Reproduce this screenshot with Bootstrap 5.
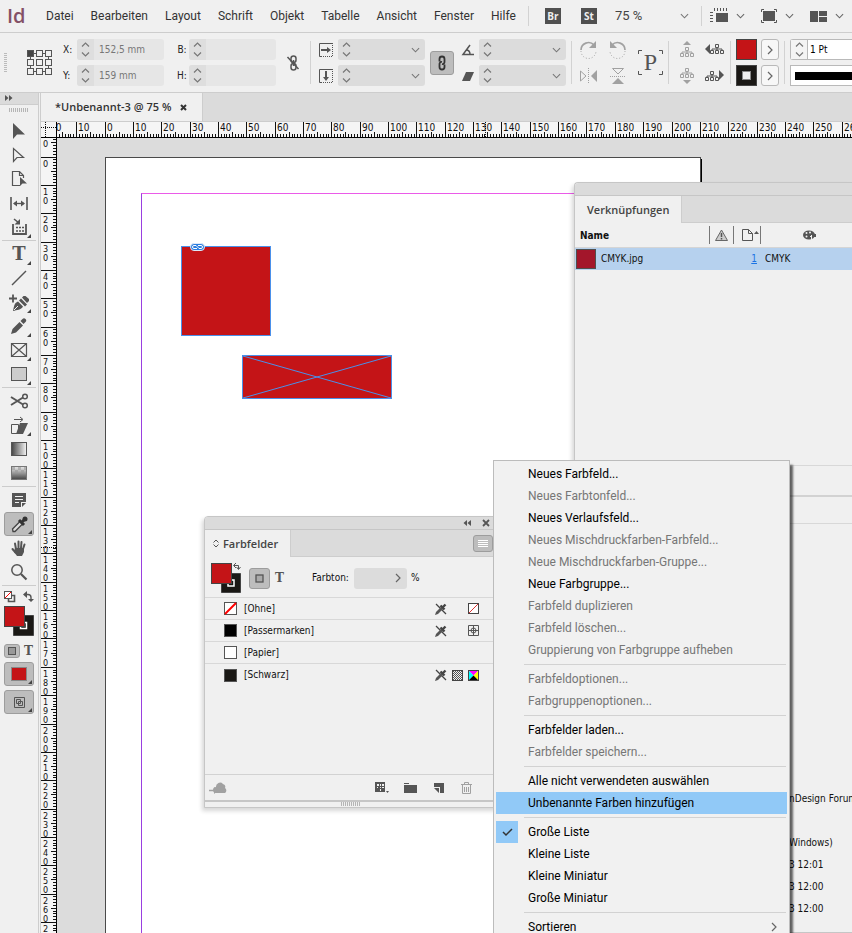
<!DOCTYPE html>
<html lang="de">
<head>
<meta charset="utf-8">
<meta name="viewport" content="width=device-width, initial-scale=1">
<title>Unbenannt-3 @ 75 %</title>
<link href="https://cdn.jsdelivr.net/npm/bootstrap@5.3.0/dist/css/bootstrap.min.css" rel="stylesheet">
<style>
:root{--ui:#f0f0f0;--bar:#dbdbdb;--line:#cdcdcd;--ink:#4f4f4f;--red:#c41417;--small:"DejaVu Sans Condensed","Roboto",sans-serif}
body{font:12px/16px "Roboto","Open Sans",sans-serif;color:#333;background:var(--ui)}
svg{display:block;flex:none;overflow:visible}
button{color:inherit;border:0;padding:0;background:none;font:inherit;line-height:1}
.ic{fill:none;stroke:#555}.ic .f,.f{fill:#555;stroke:none}
.dim{opacity:.5}
.s5{margin-left:5px}.s8{margin-left:8px}.s11{margin-left:11px}.s19{margin-left:19px}
.menubar{height:33px;border-bottom:1px solid var(--line)}
.brand-id{font:600 20px/28px "Open Sans",sans-serif;color:#845066;width:38px;padding-left:7px;flex:none}
.menus{gap:17px}
.menus a{color:#333;text-decoration:none}
.vr-bar{width:1px;background:#d2d2d2;flex:none}
.app-badge{width:16px;height:16px;background:#505050;color:#eee;font:700 10px/16px "Open Sans",sans-serif;text-align:center}
.controls{height:60px;border-bottom:1px solid var(--line)}
.pair{display:grid;grid-template-rows:21px 21px;row-gap:5px;align-items:center}
.pair label{font:10px/21px var(--small);color:#222;width:14px}
.fld{height:21px;background:#e6e6e6;border-radius:3px;overflow:hidden}
.fld .spin{width:17px;background:#dedede;display:flex;align-items:center;justify-content:center}
.fld input{width:70px;border:0;background:none;padding:0 5px;font:10px/21px var(--small);color:#777}
.fld .form-select{width:70px;height:21px;min-height:0;border:0;border-radius:0;padding:0}
.form-select{background-color:transparent;background-image:url("data:image/svg+xml,%3csvg xmlns='http://www.w3.org/2000/svg' viewBox='0 0 10 6'%3e%3cpath fill='none' stroke='%23777' stroke-width='1.2' d='M1 1l4 4 4-4'/%3e%3c/svg%3e");background-size:9px 6px;background-position:right 5px center}
.combo,.combo .spin{background:#dcdcdc}
.zoomsel{width:80px;border:0;padding:0 0 0 2px;font-size:13px;line-height:20px;color:#444;background-position:right 4px center}
.press{background:#bdbdbd;border:1px solid #9d9d9d;border-radius:3px;display:flex;align-items:center;justify-content:center}
.more{width:18px;height:21px;border:1px solid #b9b9b9;border-radius:3px;background:#f7f7f7;display:flex;align-items:center;justify-content:center}
.swatch-lg{width:21px;height:21px;border:1px solid #444;background:var(--red)}
.stroke-lg{background:#1a1815;display:flex;align-items:center;justify-content:center}
.stroke-lg::after{content:"";width:9px;height:9px;background:var(--ui);border:1px solid #888}
.glyph-p{font:24px/25px "Liberation Serif",serif;color:#555;width:25px;height:25px;text-align:center;position:relative}
.glyph-p svg{position:absolute;inset:0}
.weight{border:1px solid #b9b9b9;border-right:0;border-radius:3px 0 0 3px;background:#fff;height:21px}
.weight input{border:0;border-left:1px solid #b9b9b9;width:40px;font:10px/19px var(--small);color:#000;padding:0 0 0 2px}
.weight .spin{width:16px;background:#f4f4f4;display:flex;align-items:center;justify-content:center}
.stroke-style{border:1px solid #b9b9b9;border-right:0;background:#fff;height:21px;padding:6px 0 6px 4px}
.stroke-style i{display:block;height:8px;background:#000}
.tools{width:39px;border-right:1px solid var(--line);flex:none}
.tools-head{height:12px;background:var(--bar);border-bottom:1px solid var(--line);padding:2px 5px}
.tools-grip{padding:3px 10px 7px 9px}
.grip-h{height:4px;background:repeating-linear-gradient(90deg,#b5b5b5 0 1px,transparent 1px 2px)}
.tool{height:24px;width:100%;display:flex;align-items:center;justify-content:center;position:relative}
.tool.has::after{content:"";position:absolute;right:7px;bottom:1px;width:0;height:0;border:2px solid #444;border-top-color:transparent;border-left-color:transparent}
.tool.sel{width:30px;margin:0 4px;background:#bdbdbd;border:1px solid #9d9d9d;border-radius:3px}
.tool.sel.has::after{right:1px}
.tools hr{margin:1px 2px;border:0;height:1px;background:#ccc;opacity:1}
.serif-t{font:700 12px/14px "DejaVu Serif",serif;color:#555}
.serif-t.big{font-size:18px;line-height:22px}
.doc{margin-left:1px;border-left:1px solid var(--line)}
.doctabs{height:29px;background:var(--bar);border-bottom:1px solid var(--line)}
.doctab{font:600 11px/28px "Open Sans",sans-serif;color:#333;background:var(--ui);border-right:1px solid var(--line);padding:0 15px 0 14px;gap:9px}
.ruler{background:#f5f5f5;font:10px var(--small)}
.hruler{height:16px;border-bottom:1px solid #000}
.corner-cell{width:16px;border-right:1px solid #000;flex:none}
.vruler{width:16px;border-right:1px solid #000;flex:none;overflow:hidden;font-size:9px}
.ruler text{fill:#111}
.ruler path{stroke:#111;fill:none}
.board{background:#dcdcdc;position:relative;overflow:hidden}
.sheet{position:absolute;left:48px;top:19px;width:596px;height:843px;background:#fff;border:1px solid #4a4a4a;box-shadow:1px 2px 0 #000}
.margins{position:absolute;inset:35px;border:1px solid #9a3fe0;border-top-color:#ea5be8;border-bottom-color:#ea5be8}
.frame{position:absolute;background:var(--red);border:1px solid #4a90ea}
.frame-a{left:124px;top:108px;width:90px;height:90px}
.frame-b{left:185px;top:217px;width:150px;height:44px}
.link-mark{position:absolute;left:8px;top:-4px}
.panel{position:absolute;background:var(--ui);border:1px solid #c6c6c6;border-radius:4px 0 0 0;box-shadow:-2px 3px 4px rgba(0,0,0,.16);font:10px/16px var(--small);color:#111}
.panel-head{height:13px;background:var(--bar);border-bottom:1px solid #c6c6c6;border-radius:3px 0 0 0;flex:none}
.panel-tabs{height:27px;background:var(--bar);border-bottom:1px solid var(--line);flex:none}
.panel-tab{font:600 11px/27px "Open Sans",sans-serif;color:#444;background:var(--ui);border-right:1px solid var(--line);height:27px}
.links{left:517px;right:0;top:44px;bottom:0;border-right:0;overflow:hidden}
.links table{width:100%;table-layout:fixed;flex:none}
.links th{height:24px;padding:0;font-weight:700;color:#111;border-bottom:1px solid #d5d5d5}
.links th:first-child{padding:2px 0 0 5px}
.links td{height:23px;padding:1px 0 0;background:#b6d1ee;color:#111}
.links td:first-child{padding:0 0 0 1px}
.links a{color:#1b74e4}
.cell-rule{border-left:1px solid #777;border-right:1px solid #777;height:18px}
.thumb{width:20px;height:20px;background:#a3162b;border:1px solid #4f4f4f}
.palette{margin-left:42px}
.link-list{height:196px;border-bottom:1px solid #d8d8d8;flex:none}
.link-foot{height:31px;border-bottom:2px solid #d2d2d2;flex:none}
.info-head{height:27px;border-bottom:1px solid #d8d8d8;flex:none}
.info-lines{padding:264px 0 0 214px;white-space:nowrap}
.info-lines div{height:22px;line-height:22px}
.swatches{left:147px;top:378px;width:294px;height:292px;border-radius:4px 4px 0 0}
.sw-tools{height:41px;border-bottom:1px solid #d8d8d8;padding:2px 0 0 6px;flex:none}
.tint-field input{width:36px}
.sw-item{height:22px;border:0;border-bottom:1px solid #d8d8d8;background:transparent;border-radius:0;padding:0 18px 0 19px;color:#111;gap:7px}
.sw-marks{gap:5px;display:grid;grid-template-columns:12px 11px 11px;align-items:center;margin-left:auto}
.sw-marks svg:last-child{grid-column:3}
.chip{width:13px;height:13px;border:1px solid #555}
.fill-stroke{position:relative;width:30px;height:30px}
.sw-foot{height:26px;border-top:1px solid #d2d2d2;flex:none}
.foot-icons{gap:17px;padding-right:25px}
.sw-grip{height:7px;border-top:2px solid #c6c6c6;flex:none}
.sw-grip div{width:20px;margin:0 auto}
.popup.dropdown-menu{display:block;left:436px;top:322px;width:297px;padding:2px 0;background:#f1f1f1;border:1px solid #bcbcbc;border-radius:0;box-shadow:3px 5px 2px rgba(0,0,0,.6);font-size:12px;line-height:22px;overflow:hidden;color:#000}
.popup li:has(.dropdown-item){display:flex}
.popup .dropdown-item{height:22px;padding:0 10px 0 32px;margin:0 2px;flex:1;width:auto;line-height:22px;color:#000;position:relative;display:flex;align-items:center}
.popup .dropdown-item.disabled{color:#767676}
.popup .dropdown-item.active{background:#91c9f7;color:#000}
.popup .dropdown-divider{margin:3px 3px 3px 30px;border-top:1px solid #d2d2d2;opacity:1}
.tick{position:absolute;left:0;top:0;width:22px;height:22px;background:#91c9f7;display:flex;align-items:center;justify-content:center}
</style>
<script src="https://cdn.jsdelivr.net/npm/bootstrap@5.3.0/dist/js/bootstrap.bundle.min.js"></script>
</head>
<body class="vh-100 d-flex flex-column overflow-hidden">
<svg width="0" height="0" class="position-absolute" aria-hidden="true">
  <symbol id="updn" viewBox="0 0 9 15"><path d="M1 4.500 4.500 1 8 4.500M1 10.500 4.500 14 8 10.500" fill="none" stroke="#777" stroke-width="1.200"/></symbol>
  <symbol id="dn" viewBox="0 0 10 6"><path d="M1 1l4 4 4-4" fill="none" stroke="#666" stroke-width="1.200"/></symbol>
  <symbol id="rt" viewBox="0 0 6 10"><path d="M1 1l4 4-4 4" fill="none" stroke="#666" stroke-width="1.200"/></symbol>
  <symbol id="tree" viewBox="0 0 14 10"><path d="M5.500.5h3v3h-3zM.5 6.500h3v3h-3zM5.500 6.500h3v3h-3zM10.500 6.500h3v3h-3zM7 3.500v3M2 6.500V5h10v1.500" fill="none" stroke="#555"/></symbol>
  <symbol id="nopen" viewBox="0 0 12 12"><path d="M1 1l10 10" stroke="#444" stroke-width="1.200"/><path d="M0 12l1-3 5-5 2 2-5 5z" fill="#555"/><path d="M5.500 2.500 9.500 6.500M7.500 4.500l3-3" stroke="#444" stroke-width="2.400"/></symbol>
</svg>

<header class="menubar d-flex align-items-center flex-shrink-0">
  <div class="brand-id">Id</div>
  <nav class="menus d-flex ps-2" aria-label="Hauptmenü">
    <a href="#">Datei</a><a href="#">Bearbeiten</a><a href="#">Layout</a><a href="#">Schrift</a><a href="#">Objekt</a><a href="#">Tabelle</a><a href="#">Ansicht</a><a href="#">Fenster</a><a href="#">Hilfe</a>
  </nav>
  <div class="d-flex align-items-center ms-auto">
    <span class="vr-bar align-self-stretch me-3"></span>
    <button class="app-badge me-3" type="button">Br</button>
    <button class="app-badge ms-1 me-3" type="button">St</button>
    <select class="form-select zoomsel" aria-label="Zoomstufe"><option>75 %</option></select>
    <span class="vr-bar align-self-stretch ms-2 me-2"></span>
    <button class="d-flex align-items-center gap-2 me-3" type="button" aria-label="Anzeigeoptionen">
      <svg width="18" height="16" class="ic"><rect class="f" x="6" y="5" width="12" height="9"/><path d="M4.500 0v3M7.500 0v3M10.500 0v3M13.500 0v3M16.500 0v3M0 4.500h3M0 7.500h3M0 10.500h3M0 13.500h3"/></svg>
      <svg width="9" height="6"><use href="#dn"/></svg></button>
    <button class="d-flex align-items-center gap-2 me-3" type="button" aria-label="Bildschirmmodus">
      <svg width="16" height="14" class="ic"><rect class="f" x="2" y="2" width="12" height="10"/><path d="M.5 3V.5H3M13 .5h2.500V3M.5 11v2.500H3M13 13.500h2.500V11"/></svg>
      <svg width="9" height="6"><use href="#dn"/></svg></button>
    <button class="d-flex align-items-center gap-2 me-2" type="button" aria-label="Dokumente anordnen">
      <svg width="17" height="11"><path class="f" d="M0 0h8v11H0zM9 0h8v5H9zM9 6h8v5H9z"/></svg>
      <svg width="9" height="6"><use href="#dn"/></svg></button>
  </div>
</header>

<section class="controls d-flex align-items-center flex-shrink-0 ps-1" aria-label="Steuerung">
  <svg width="4" height="20"><path d="M0 .5h3M0 2.500h3M0 4.500h3M0 6.500h3M0 8.500h3M0 10.500h3M0 12.500h3M0 14.500h3M0 16.500h3M0 18.500h3" stroke="#bbb"/></svg>
  <svg width="25" height="25" class="ic s19"><path d="M6 3.500h13M6 21.500h13M3.500 6v13M21.500 6v13"/><g fill="#f0f0f0"><rect x=".5" y=".5" width="6" height="6" fill="#444"/><rect x="9.500" y=".5" width="6" height="6"/><rect x="18.500" y=".5" width="6" height="6"/><rect x=".5" y="9.500" width="6" height="6"/><rect x="9.500" y="9.500" width="6" height="6"/><rect x="18.500" y="9.500" width="6" height="6"/><rect x=".5" y="18.500" width="6" height="6"/><rect x="9.500" y="18.500" width="6" height="6"/><rect x="18.500" y="18.500" width="6" height="6"/></g></svg>
  <div class="pair s11">
    <div class="d-flex"><label for="px">X:</label><div class="fld d-flex"><button class="spin" type="button" aria-label="X ändern"><svg width="9" height="15"><use href="#updn"/></svg></button><input id="px" value="152,5 mm"></div></div>
    <div class="d-flex"><label for="py">Y:</label><div class="fld d-flex"><button class="spin" type="button" aria-label="Y ändern"><svg width="9" height="15"><use href="#updn"/></svg></button><input id="py" value="159 mm"></div></div>
  </div>
  <div class="pair s11">
    <div class="d-flex"><label class="text-center" for="pb">B:</label><div class="fld d-flex"><button class="spin" type="button" aria-label="Breite ändern"><svg width="9" height="15"><use href="#updn"/></svg></button><input id="pb"></div></div>
    <div class="d-flex"><label class="text-center" for="ph">H:</label><div class="fld d-flex"><button class="spin" type="button" aria-label="Höhe ändern"><svg width="9" height="15"><use href="#updn"/></svg></button><input id="ph"></div></div>
  </div>
  <svg width="12" height="16" class="ic s11"><rect x="4" y="1" width="5" height="6.500" rx="2.500" stroke-width="1.500"/><rect x="4" y="8.500" width="5" height="6.500" rx="2.500" stroke-width="1.500"/><path d="M6.500 5v6M.5 2l11 12" stroke-width="1.500"/></svg>
  <span class="vr-bar my-2 align-self-stretch s11"></span>
  <div class="pair s8">
    <div class="d-flex align-items-center"><svg width="14" height="14" class="ic"><path d="M14 .5H.5v13H3"/><path d="M4 13.500h10M13.500 2v12" stroke-dasharray="1 1"/><path class="f" d="M2 6h6V4l4 3-4 3V8H2z"/></svg><div class="fld combo d-flex s5"><button class="spin" type="button" aria-label="X-Skalierung ändern"><svg width="9" height="15"><use href="#updn"/></svg></button><select class="form-select" aria-label="X-Skalierung"><option></option></select></div></div>
    <div class="d-flex align-items-center"><svg width="14" height="14" class="ic"><path d="M14 .5H.5v13H3"/><path d="M4 13.500h10M13.500 2v12" stroke-dasharray="1 1"/><path class="f" d="M6 2h2v6h2l-3 4-3-4h2z"/></svg><div class="fld combo d-flex s5"><button class="spin" type="button" aria-label="Y-Skalierung ändern"><svg width="9" height="15"><use href="#updn"/></svg></button><select class="form-select" aria-label="Y-Skalierung"><option></option></select></div></div>
  </div>
  <button class="press s5 p-1" type="button" aria-label="Proportionen beibehalten"><svg width="14" height="14" class="ic"><path d="M4.500 5.500V3a2.500 2.500 0 0 1 5 0v3a2 2 0 0 1-2.500 2M9.500 8.500V11a2.500 2.500 0 0 1-5 0V8A2 2 0 0 1 7 6" stroke-width="1.800" stroke="#333"/></svg></button>
  <div class="pair s8">
    <div class="d-flex align-items-center"><svg width="12" height="12" class="ic"><path d="M8 1 1 10.500h11M4 6q4 0 4 4.500" stroke-width="1.500"/></svg><div class="fld combo d-flex s5"><button class="spin" type="button" aria-label="Drehwinkel ändern"><svg width="9" height="15"><use href="#updn"/></svg></button><select class="form-select" aria-label="Drehwinkel"><option></option></select></div></div>
    <div class="d-flex align-items-center"><svg width="12" height="12"><path class="f" d="M4 2h8l-4 9H0z"/></svg><div class="fld combo d-flex s5"><button class="spin" type="button" aria-label="Scherwinkel ändern"><svg width="9" height="15"><use href="#updn"/></svg></button><select class="form-select" aria-label="Scherwinkel"><option></option></select></div></div>
  </div>
  <span class="vr-bar my-2 align-self-stretch s5"></span>
  <div class="pair dim s8">
    <div class="d-flex"><svg width="18" height="17" class="ic"><path d="M1 9a7.500 7.500 0 0 1 13-5" stroke-width="1.700"/><path d="M1 10a7.500 7.500 0 0 0 15 0" stroke-dasharray="1 2"/><path class="f" d="M16 0v7H9z"/></svg><svg width="18" height="17" class="ic s11"><path d="M16 9A7.500 7.500 0 0 0 3 4" stroke-width="1.700"/><path d="M16 10a7.500 7.500 0 0 1-15 0" stroke-dasharray="1 2"/><path class="f" d="M1 0v7h7z"/></svg></div>
    <div class="d-flex"><svg width="18" height="16" class="ic"><path d="M.5 3v10L6 8z"/><path class="f" d="M17 2v12l-6-6z"/><path d="M8.500 0v16" stroke-dasharray="1 1"/></svg><svg width="18" height="16" class="ic s11"><path d="M3.500.5h11L9 6z"/><path class="f" d="M3 16h12L9 10z"/><path d="M1 8.500h16" stroke-dasharray="1 1"/></svg></div>
  </div>
  <div class="glyph-p s11">P<svg width="25" height="25" class="ic"><path d="M.5 4V.5H4M21 .5h3.500V4M.5 21v3.500H4M21 24.500h3.500V21"/></svg></div>
  <span class="vr-bar my-2 align-self-stretch s5"></span>
  <div class="pair s11">
    <div class="d-flex"><svg width="14" height="17" class="dim"><path class="f" d="M3 4l4-4 4 4z"/><use href="#tree" y="6" width="14" height="10"/></svg><svg width="20" height="17" class="s11"><path class="f" d="M5 3v10L0 8z"/><use href="#tree" x="5" y="3" width="14" height="10"/></svg></div>
    <div class="d-flex"><svg width="14" height="17" class="dim"><use href="#tree" y="1" width="14" height="10"/><path class="f" d="M3 13h8l-4 4z"/></svg><svg width="20" height="17" class="s11"><use href="#tree" y="4" width="14" height="10"/><path class="f" d="M14 3v10l5-5z"/></svg></div>
  </div>
  <span class="vr-bar my-2 align-self-stretch s5"></span>
  <div class="pair s5">
    <div class="d-flex"><button class="swatch-lg" type="button" aria-label="Fläche"></button><button class="more ms-1" type="button" aria-label="Flächenfarben"><svg width="6" height="10"><use href="#rt"/></svg></button></div>
    <div class="d-flex"><button class="swatch-lg stroke-lg" type="button" aria-label="Kontur"></button><button class="more ms-1" type="button" aria-label="Konturfarben"><svg width="6" height="10"><use href="#rt"/></svg></button></div>
  </div>
  <span class="vr-bar my-2 align-self-stretch s5"></span>
  <div class="pair flex-grow-1 s5">
    <div class="weight d-flex"><button class="spin" type="button" aria-label="Konturstärke ändern"><svg width="9" height="15"><use href="#updn"/></svg></button><input class="flex-grow-1" value="1 Pt" aria-label="Konturstärke"></div>
    <div class="stroke-style"><i></i></div>
  </div>
</section>

<main class="d-flex flex-grow-1 overflow-hidden">
  <aside class="tools" aria-label="Werkzeuge">
    <div class="tools-head"><svg width="8" height="6"><path class="f" d="M0 0l3.500 3L0 6zM4 0l3.500 3L4 6z"/></svg></div>
    <div class="tools-grip"><div class="grip-h"></div></div>
    <button class="tool" type="button" aria-label="Auswahl"><svg width="14" height="16"><path class="f" d="M1 0v16l4-4.500h8z"/></svg></button>
    <button class="tool" type="button" aria-label="Direktauswahl"><svg width="14" height="16" class="ic"><path d="M1.500 1.500v13l3.500-4h6.500z" stroke-width="1.200"/></svg></button>
    <button class="tool" type="button" aria-label="Seite"><svg width="15" height="16" class="ic"><path d="M8 14.500H.5V.5h7l4 4V7M7.500.5v4h4" stroke-width="1.200"/><path class="f" d="M8 6v9l2.500-2.500H15z"/></svg></button>
    <button class="tool" type="button" aria-label="Lücke"><svg width="18" height="13" class="ic"><path d="M1 0v13M17 0v13" stroke-width="1.600"/><path d="M4 6.500h10" stroke-width="1.300"/><path class="f" d="M3 6.500l4-3v6zM15 6.500l-4-3v6z"/></svg></button>
    <button class="tool has" type="button" aria-label="Inhaltsaufnahme"><svg width="15" height="16" class="ic"><path d="M1 5v10h13V5" stroke-width="1.800"/><path d="M4 8.500h8M4 12h8" stroke-dasharray="2 1" stroke-width="1.600"/><path d="M2 0l5 4" stroke-width="1.600"/><path class="f" d="M8 0v5.500H2.500z"/></svg></button>
    <hr>
    <button class="tool has serif-t big" type="button" aria-label="Text">T</button>
    <button class="tool" type="button" aria-label="Linie"><svg width="14" height="14" class="ic"><path d="M0 14 14 0" stroke-width="1.500"/></svg></button>
    <button class="tool has" type="button" aria-label="Zeichenstift"><svg width="20" height="17" class="ic"><path d="M0 4.500h8M4 .5v8" stroke-width="1.800"/><path class="f" d="M4 17c1-4 1-8 5-9.500l5 5C12 16 8 16 4 17zM10 6.500l2-2 6 6-2 2zM13 3.500l1.500-1.500h2l3.500 3v2l-2 2z"/><path d="M5 16l4-4" stroke="#eee"/></svg></button>
    <button class="tool has" type="button" aria-label="Buntstift"><svg width="16" height="16"><path class="f" d="M0 16l1.500-5 7-7L12 7.500l-7 7zM9.500 3l2-2c1-1 2-1 3 0s1 2 0 3l-2 2z"/></svg></button>
    <button class="tool has" type="button" aria-label="Rechteckrahmen"><svg width="16" height="14" class="ic"><path d="M.5.5h15v13H.5zM.5.5l15 13M15.500.5l-15 13" stroke-width="1.200"/></svg></button>
    <button class="tool has" type="button" aria-label="Rechteck"><svg width="16" height="14" class="ic"><rect x=".5" y=".5" width="15" height="13" fill="#ccc"/></svg></button>
    <hr>
    <button class="tool" type="button" aria-label="Schere"><svg width="17" height="16" class="ic"><circle cx="14" cy="3.500" r="2.300" stroke-width="1.500"/><circle cx="14" cy="12.500" r="2.300" stroke-width="1.500"/><path d="M12 4.500 0 12M12 11.500 0 4" stroke-width="2"/></svg></button>
    <button class="tool has" type="button" aria-label="Frei transformieren"><svg width="17" height="17" class="ic"><path d="M.5 7.500h7v9h-7z"/><path class="f" d="M9 6h8l-5 11H5z"/><path d="M3 2.500h8M9 0l3 2.500L9 5"/></svg></button>
    <button class="tool" type="button" aria-label="Verlaufsfarbfeld"><svg width="16" height="14"><defs><linearGradient id="g1"><stop stop-color="#444"/><stop offset="1" stop-color="#f5f5f5"/></linearGradient><linearGradient id="g2" x2="0" y2="1"><stop offset=".1" stop-color="#ddd"/><stop offset="1" stop-color="#444"/></linearGradient></defs><rect x=".5" y=".5" width="15" height="13" fill="url(#g1)" stroke="#555"/></svg></button>
    <button class="tool" type="button" aria-label="Weiche Verlaufskante"><svg width="16" height="14"><rect x=".5" y=".5" width="15" height="13" fill="url(#g2)" stroke="#777"/><path fill="#999" opacity=".6" d="M1 1h3v3H1zM7 1h3v3H7zM13 1h2v3h-2zM4 4h3v3H4zM10 4h3v3h-3z"/></svg></button>
    <hr>
    <button class="tool" type="button" aria-label="Notiz"><svg width="14" height="14"><path class="f" d="M0 0h14v9H9v5H0zM10 14v-4h4z"/><path d="M3 3.500h8M3 6.500h8M3 9.500h4" stroke="#f0f0f0"/></svg></button>
    <button class="tool sel has" type="button" aria-label="Pipette"><svg width="17" height="17"><path d="M2 15.500 1.500 13 9 5.500l2.500 2.500L4 15.500z" fill="#ddd" stroke="#444" stroke-width="1.300"/><path d="M8 4l5 5M11 6l4-4" stroke="#333" stroke-width="3"/><circle cx="14" cy="3" r="2.500" fill="#333"/></svg></button>
    <button class="tool" type="button" aria-label="Hand"><svg width="16" height="16" class="ic"><path class="f" d="M4 8h9v4l-2 4H6l-3-4z"/><path d="M5 9 4 3.500M7.500 8V1.500M10 8l.5-6M12 9l1.500-4.500M4.500 12.500l-3-3.500" stroke-width="2" stroke-linecap="round"/></svg></button>
    <button class="tool" type="button" aria-label="Zoom"><svg width="16" height="16" class="ic"><circle cx="6" cy="6" r="5.200" stroke-width="1.500"/><path d="M10 10l5.500 5.500" stroke-width="2.200"/></svg></button>
    <hr>
    <div class="d-flex justify-content-between px-1 pt-1 mb-1"><svg width="11" height="11" class="ic"><path d="M4.500 4.500h6v6h-6z" stroke-width="1.600"/><rect x=".5" y=".5" width="7" height="7" fill="#fff"/><path d="M1 7l6-6" stroke="red"/></svg><svg width="11" height="11" class="ic"><path d="M2 3.500h3q3 0 3 3V9" stroke-width="1.400"/><path class="f" d="M0 3.500 4 0v7zM5 8h6l-3 3z"/></svg></div>
    <div class="fill-stroke ms-1"><svg width="30" height="30"><path d="M9.500 9.500h20v20h-20z" fill="#1a1815" stroke="#444"/><rect x="16.500" y="16.500" width="6" height="6" fill="none" stroke="#fff" stroke-width="1.500"/><rect x=".5" y=".5" width="20" height="20" fill="#c41417" stroke="#444"/></svg></div>
    <div class="d-flex align-items-center gap-1 ms-1 my-1 pt-1"><button class="press p-1" type="button" aria-label="Formatierung wirkt sich auf Rahmen aus"><svg width="6" height="4" class="ic"><rect x="-.5" y="-1.500" width="7" height="7" fill="#999"/></svg></button><button class="serif-t" type="button" aria-label="Formatierung wirkt sich auf Text aus">T</button></div>
    <button class="tool sel has" type="button" aria-label="Farbe anwenden"><svg width="16" height="14"><rect x=".5" y=".5" width="15" height="13" fill="#c41417" stroke="#888"/></svg></button>
    <button class="tool sel has mt-1" type="button" aria-label="Modus"><svg width="11" height="11" class="ic"><path d="M.5.5h10v10H.5zM2.500 2.500h4v4h-4zM4.500 4.500h4v4h-4z"/></svg></button>
  </aside>

  <section class="doc d-flex flex-column flex-grow-1 overflow-hidden">
    <div class="doctabs d-flex flex-shrink-0"><div class="doctab d-flex align-items-center">*Unbenannt-3 @ 75 %<button type="button" aria-label="Schließen"><svg width="7" height="7"><path d="M1 1l5 5M6 1 1 6" stroke="#333" stroke-width="2"/></svg></button></div></div>
    <div class="ruler hruler d-flex flex-shrink-0">
      <div class="corner-cell"><svg width="15" height="15"><path d="M4.500 0v15M0 5.500h15" stroke-dasharray="1 1"/></svg></div>
      <div class="flex-grow-1 overflow-hidden"><svg id="hr" width="796" height="15"></svg></div>
    </div>
    <div class="d-flex flex-grow-1 overflow-hidden">
      <div class="ruler vruler"><svg id="vr" width="15" height="796"></svg></div>
      <div class="board flex-grow-1">
        <div class="sheet"><div class="margins"></div></div>
        <div class="frame frame-a"><svg class="link-mark" width="15" height="8"><rect x=".5" y=".5" width="14" height="7" rx="3.500" fill="#2b7de0" stroke="#dfe9f7"/><path d="M7 5.500H4a1.500 1.500 0 0 1 0-3h2l3 3h2a1.500 1.500 0 0 0 0-3H8" fill="none" stroke="#fff"/></svg></div>
        <div class="frame frame-b"><svg width="100%" height="100%" viewBox="0 0 148 42" preserveAspectRatio="none"><path d="M0 0l148 42M148 0 0 42" stroke="#4a90ea"/></svg></div>

        <section class="panel links d-flex flex-column" aria-label="Verknüpfungen">
          <div class="panel-head"></div>
          <div class="panel-tabs d-flex"><div class="panel-tab px-2"><span class="px-1">Verknüpfungen</span></div></div>
          <table>
            <colgroup><col width="134"><col width="25"><col width="27"><col></colgroup>
            <thead><tr><th scope="col">Name</th>
            <th scope="col"><div class="cell-rule d-flex align-items-center justify-content-center"><svg width="13" height="12"><path d="M6.500 1 12.500 11.500H.5z" fill="#ccc" stroke="#666"/><path d="M6.500 4v4M6.500 9v1.500" stroke="#555" stroke-width="1.500"/></svg></div></th>
            <th scope="col"><div class="cell-rule border-start-0 d-flex align-items-center ps-2"><svg width="17" height="12" class="ic"><path d="M.5.5h6l4 4v7H.5zM6.500.5v4h4"/><path class="f" d="M12 5l2.500-3L17 5z"/></svg></div></th>
            <th scope="col"><svg width="13" height="10" class="palette"><ellipse class="f" cx="6" cy="5" rx="6" ry="4.500"/><path d="M7 6.500h6M8.500 5v5" stroke="#f0f0f0"/><circle cx="3.500" cy="3" r="1" fill="#f0f0f0"/><circle cx="7" cy="2.500" r="1" fill="#f0f0f0"/><circle cx="3.500" cy="6.500" r="1" fill="#f0f0f0"/><path class="f" d="M9 4h4v3H9z"/></svg></th></tr></thead>
            <tbody><tr><td><div class="d-flex align-items-center"><span class="thumb"></span><span class="s5">CMYK.jpg</span></div></td><td></td><td class="text-end pe-1"><a href="#">1</a></td><td class="ps-1">CMYK</td></tr></tbody>
          </table>
          <div class="link-list"></div>
          <div class="link-foot"></div>
          <div class="info-head"></div>
          <div class="info-lines"><div>nDesign Forum</div><div></div><div>Windows)</div><div>3 12:01</div><div>3 12:00</div><div>3 12:00</div></div>
        </section>

        <section class="panel swatches d-flex flex-column" aria-label="Farbfelder">
          <div class="panel-head d-flex justify-content-end align-items-center gap-2 pe-2"><svg width="8" height="6" class="me-1"><path class="f" d="M4 0 .5 3 4 6zM8 0 4.500 3 8 6z"/></svg><svg width="6" height="6"><path d="M0 0l6 6M6 0 0 6" stroke="#555" stroke-width="1.800"/></svg></div>
          <div class="panel-tabs d-flex align-items-center justify-content-between">
            <div class="panel-tab d-flex align-items-center px-2"><svg width="6" height="9" class="ic"><path d="M.5 3.500 3 1l2.500 2.500M.5 5.500 3 8l2.500-2.500"/></svg><span class="ms-1 pe-1">Farbfelder</span></div>
            <button class="press me-1 px-1 py-1" type="button" aria-label="Bedienfeldmenü"><svg width="10" height="7"><path d="M0 .5h10M0 2.500h10M0 4.500h10M0 6.500h10" stroke="#fff"/></svg></button>
          </div>
          <div class="sw-tools d-flex align-items-center">
            <div class="fill-stroke"><svg width="30" height="30"><path d="M10.500 10.500h19v19h-19z" fill="#1a1815" stroke="#444"/><rect x="17" y="17" width="6" height="6" fill="none" stroke="#fff" stroke-width="1.500"/><rect x=".5" y=".5" width="20" height="20" fill="#c41417" stroke="#444"/><path d="M23 2.500h4.500V6M25 0l-2.500 2.500L25 5M25.500 4l2 2.500 2-2.500" fill="none" stroke="#555"/></svg></div>
            <button class="press p-1 s8" type="button" aria-label="Rahmen"><svg width="11" height="11" class="ic"><rect x="2" y="2" width="7" height="7" fill="#aaa" stroke-width="1.300"/></svg></button>
            <button class="serif-t s5" type="button" aria-label="Text">T</button>
            <label for="tint" class="ms-4 ps-1">Farbton:</label>
            <div class="fld combo tint-field d-flex align-items-center s5"><input id="tint"><button class="spin" type="button" aria-label="Farbton einstellen"><svg width="6" height="10"><use href="#rt"/></svg></button></div><span class="ms-1">%</span>
          </div>
          <div class="list-group list-group-flush">
            <div class="list-group-item sw-item d-flex align-items-center"><svg width="13" height="13"><rect x=".5" y=".5" width="12" height="12" fill="#fff" stroke="#555"/><path d="M1 12 12 1" stroke="red" stroke-width="2"/></svg>[Ohne]<span class="sw-marks"><svg width="12" height="12"><use href="#nopen"/></svg><svg width="11" height="11"><rect x=".5" y=".5" width="10" height="10" fill="#fff" stroke="#444"/><path d="M1 10l9-9" stroke="#d33"/></svg></span></div>
            <div class="list-group-item sw-item d-flex align-items-center"><span class="chip bg-black"></span>[Passermarken]<span class="sw-marks"><svg width="12" height="12"><use href="#nopen"/></svg><svg width="11" height="11" class="ic"><path d="M.5.5h10v10H.5zM5.500 1v9M1 5.500h9"/><circle cx="5.500" cy="5.500" r="2.500"/></svg></span></div>
            <div class="list-group-item sw-item d-flex align-items-center"><span class="chip bg-white"></span>[Papier]</div>
            <div class="list-group-item sw-item d-flex align-items-center"><svg width="13" height="13"><rect x=".5" y=".5" width="12" height="12" fill="#1a1815" stroke="#555"/></svg>[Schwarz]<span class="sw-marks"><svg width="12" height="12"><use href="#nopen"/></svg><svg width="11" height="11"><defs><pattern id="chk" width="2" height="2" patternUnits="userSpaceOnUse"><path d="M0 0h1v1H0zM1 1h1v1H1z" fill="#555"/></pattern></defs><rect x=".5" y=".5" width="10" height="10" fill="url(#chk)" stroke="#444"/></svg><svg width="11" height="11"><path d="M0 0h11L5.500 5.500z" fill="#f0f"/><path d="M0 0v11l5.500-5.500z" fill="#0ff"/><path d="M11 0v11L5.500 5.500z" fill="#ff0"/><path d="M0 11h11L5.500 5.500z"/><rect x=".5" y=".5" width="10" height="10" fill="none" stroke="#444"/></svg></span></div>
          </div>
          <div class="flex-grow-1"></div>
          <div class="sw-foot d-flex align-items-center ps-1">
            <svg width="19" height="12" class="dim"><path class="f" d="M7 11a3 3 0 0 1 0-6 4 4 0 0 1 7-3 3 3 0 0 1 2 4 3 3 0 0 1 0 5z"/><path d="M0 8.500h6" stroke="#555" stroke-width="1.500"/><path class="f" d="M5 5l4 3.500L5 12z"/></svg>
            <div class="foot-icons d-flex align-items-center ms-auto">
              <button type="button" aria-label="Ansicht"><svg width="12" height="11"><path class="f" d="M0 0h10v10H0zM11 9h3l-1.500 2z"/><path d="M2 2h2v2H2zM5 2h1v2H5zM7 2h2v2H7zM2 5h1v1H2zM5 5h1v1H5zM7 5h2v1H7zM5 7h1v2H5z" fill="#f0f0f0"/></svg></button>
              <button type="button" aria-label="Neue Farbgruppe"><svg width="13" height="10"><path class="f" d="M0 0h5v1H0zM0 2h13v8H0z"/></svg></button>
              <button type="button" aria-label="Neues Farbfeld"><svg width="10" height="10"><path class="f" d="M0 0h10v10H6V4H0zM0 5h5v5z"/></svg></button>
              <button type="button" class="dim" aria-label="Löschen"><svg width="11" height="12" class="ic"><path d="M0 2.500h11M3.500 2V.5h4V2M1.500 3v8.500h8V3M3.500 5v5M5.500 5v5M7.500 5v5"/></svg></button>
            </div>
          </div>
          <div class="sw-grip"><div class="grip-h"></div></div>
        </section>

        <ul class="dropdown-menu popup show">
          <li><a class="dropdown-item" href="#">Neues Farbfeld...</a></li>
          <li><a class="dropdown-item disabled" href="#">Neues Farbtonfeld...</a></li>
          <li><a class="dropdown-item" href="#">Neues Verlaufsfeld...</a></li>
          <li><a class="dropdown-item disabled" href="#">Neues Mischdruckfarben-Farbfeld...</a></li>
          <li><a class="dropdown-item disabled" href="#">Neue Mischdruckfarben-Gruppe...</a></li>
          <li><a class="dropdown-item" href="#">Neue Farbgruppe...</a></li>
          <li><a class="dropdown-item disabled" href="#">Farbfeld duplizieren</a></li>
          <li><a class="dropdown-item disabled" href="#">Farbfeld löschen...</a></li>
          <li><a class="dropdown-item disabled" href="#">Gruppierung von Farbgruppe aufheben</a></li>
          <li><hr class="dropdown-divider"></li>
          <li><a class="dropdown-item disabled" href="#">Farbfeldoptionen...</a></li>
          <li><a class="dropdown-item disabled" href="#">Farbgruppenoptionen...</a></li>
          <li><hr class="dropdown-divider"></li>
          <li><a class="dropdown-item" href="#">Farbfelder laden...</a></li>
          <li><a class="dropdown-item disabled" href="#">Farbfelder speichern...</a></li>
          <li><hr class="dropdown-divider"></li>
          <li><a class="dropdown-item" href="#">Alle nicht verwendeten auswählen</a></li>
          <li><a class="dropdown-item active" href="#">Unbenannte Farben hinzufügen</a></li>
          <li><hr class="dropdown-divider"></li>
          <li><a class="dropdown-item" href="#"><span class="tick"><svg width="11" height="8"><path d="M1 4l3 3 6-6" fill="none" stroke="#333" stroke-width="1.500"/></svg></span>Große Liste</a></li>
          <li><a class="dropdown-item" href="#">Kleine Liste</a></li>
          <li><a class="dropdown-item" href="#">Kleine Miniatur</a></li>
          <li><a class="dropdown-item" href="#">Große Miniatur</a></li>
          <li><hr class="dropdown-divider"></li>
          <li><a class="dropdown-item" href="#">Sortieren<svg width="6" height="10" class="ms-auto"><use href="#rt"/></svg></a></li>
        </ul>
      </div>
    </div>
  </section>
</main>
<script>
// Rulers: one unit is 1 mm, drawn at 2.835 px; labels every 10 mm.
// The cursor position is marked with a dotted line on each ruler.
const mm = 2.835;
function ruler(svg, origin, length, vertical, cursor) {
  let d = "", labels = "";
  for (let i = -20; origin + i * mm < length; i++) {
    const p = Math.floor(origin + i * mm) + 0.5;
    const size = i % 10 === 0 ? 15 : i % 5 === 0 ? 5 : 3;
    d += vertical ? `M${15 - size} ${p}h${size}` : `M${p} ${15 - size}v${size}`;
    if (i % 10) continue;
    const text = String(Math.abs(i));
    if (vertical) [...text].forEach((c, k) => labels += `<text x="2" y="${p + 9.5 + k * 9}">${c}</text>`);
    else labels += `<text x="${p + 1.5}" y="9">${text}</text>`;
  }
  const mark = vertical ? `M0 ${cursor}h15` : `M${cursor} 0v15`;
  svg.innerHTML = `<path d="${d}"/>${labels}<path d="${mark}" stroke-dasharray="1 1"/>`;
}
ruler(document.getElementById("hr"), 48, 796, false, 428.5);
ruler(document.getElementById("vr"), 19, 796, true, 409.5);
</script>
</body>
</html>
